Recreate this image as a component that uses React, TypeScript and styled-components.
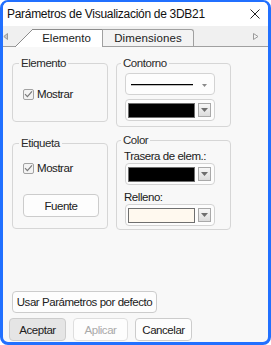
import React from "react";
import styled, { createGlobalStyle } from "styled-components";

const GlobalStyle = createGlobalStyle`
  html, body {
    margin: 0;
    padding: 0;
    background: #ffffff;
  }
  * {
    box-sizing: border-box;
  }
`;

const uiFont = `"Liberation Sans", Arial, sans-serif`;

const Window = styled.div`
  width: 271px;
  height: 345px;
  border: 3px solid #2170ff;
  border-top-width: 2px;
  border-radius: 8px;
  overflow: hidden;
  display: flex;
  flex-direction: column;
  background: #f8f8f8;
  font-family: ${uiFont};
  font-size: 11.5px;
  letter-spacing: -0.45px;
  color: #202020;
`;

const TitleBar = styled.div`
  height: 24px;
  flex: none;
  background: #ffffff;
  display: flex;
  align-items: center;
  justify-content: space-between;
  padding: 0 8px 0 4px;
`;

const Title = styled.span`
  font-size: 12px;
  letter-spacing: -0.3px;
  color: #111111;
`;

const TabStrip = styled.div`
  height: 21px;
  flex: none;
  background: #f0f0f0;
  border-bottom: 1px solid #a0a0a0;
  display: flex;
  align-items: flex-end;
`;

const ScrollArrow = styled.svg<{ $side: "left" | "right" }>`
  align-self: center;
  flex: none;
  margin: ${(p) => (p.$side === "left" ? "0 7px 0 0" : "0 9px 0 auto")};
`;

const ActiveTab = styled.div`
  position: relative;
  z-index: 1;
  width: 87px;
  height: 18px;
  margin-bottom: -1px;
  padding-left: 16px;
  display: flex;
  align-items: center;
  justify-content: center;
  font-size: 11.5px;
  letter-spacing: 0;
  color: #222;
  background:
    linear-gradient(#8c8c8c, #8c8c8c) 18px 0 / calc(100% - 18px) 1px no-repeat,
    linear-gradient(
        to top left,
        #ffffff calc(50% - 0.6px),
        #8c8c8c calc(50% - 0.6px),
        #8c8c8c calc(50% + 0.6px),
        transparent calc(50% + 0.6px)
      )
      0 0 / 18px 100% no-repeat,
    linear-gradient(#ffffff, #ffffff) 18px 0 / calc(100% - 18px) 100% no-repeat;
`;

const Tab = styled.div`
  width: 92px;
  height: 17px;
  border: 1px solid #a0a0a0;
  border-bottom: none;
  border-top-right-radius: 3px;
  background: #f3f3f3;
  display: flex;
  align-items: center;
  justify-content: center;
  font-size: 11.5px;
  letter-spacing: 0.1px;
  color: #222;
`;

const Content = styled.div`
  flex: 1;
  display: flex;
  flex-direction: column;
  padding: 9px 0 1px 6px;
`;

const Columns = styled.div`
  display: flex;
  align-items: flex-start;
  gap: 8px;
  margin-left: 3px;
`;

const Column = styled.div<{ $width: number }>`
  width: ${(p) => p.$width}px;
  display: flex;
  flex-direction: column;
`;

const Group = styled.fieldset<{ $pad: string; $top?: number }>`
  margin: ${(p) => p.$top ?? 0}px 0 0 0;
  min-width: 0;
  border: 1px solid #d6d6d6;
  border-radius: 4px;
  padding: ${(p) => p.$pad};
  display: flex;
  flex-direction: column;
`;

const Legend = styled.legend`
  margin-left: -4px;
  padding: 0 2px;
  line-height: 14px;
  color: #2a2a2a;
`;

const CheckRow = styled.label`
  display: flex;
  align-items: center;
  gap: 3px;
  height: 14px;
`;

const CheckBox = styled.span`
  width: 11px;
  height: 11px;
  border: 1px solid #a2a2a2;
  border-radius: 2px;
  background: #f3f3f3;
  display: flex;
  align-items: center;
  justify-content: center;
`;

const FieldLabel = styled.div<{ $top?: number }>`
  height: 14px;
  line-height: 14px;
  margin: ${(p) => p.$top ?? 0}px 0 0 -1px;
`;

const Combo = styled.div<{ $top?: number }>`
  width: 90px;
  height: 22px;
  margin-top: ${(p) => p.$top ?? 0}px;
  border: 1px solid #d3d3d3;
  border-radius: 4px;
  background: #fdfdfd;
  display: flex;
  align-items: center;
  padding: 0 2px 0 2px;
`;

const LineSample = styled.span`
  width: 62px;
  height: 1px;
  margin-left: 3px;
  background: #000000;
  box-shadow: 0 0.5px 0 rgba(0, 0, 0, 0.5);
`;

const TinyArrow = styled.svg`
  margin: 2px 5px 0 auto;
`;

const Swatch = styled.span<{ $color: string }>`
  width: 67px;
  height: 15px;
  border: 1px solid #6f6f6f;
  background: ${(p) => p.$color};
`;

const ArrowButton = styled.span`
  width: 13px;
  height: 14px;
  margin-left: auto;
  margin-right: 1px;
  border: 1px solid #a9a9a9;
  background: linear-gradient(#f7f7f7, #dcdcdc);
  display: flex;
  align-items: center;
  justify-content: center;
`;

type Tone = "normal" | "pressed" | "disabled";

const Button = styled.button<{ $w: number; $h: number; $tone?: Tone; $top?: number }>`
  width: ${(p) => p.$w}px;
  height: ${(p) => p.$h}px;
  margin-top: ${(p) => (p.$top === undefined ? "0" : `${p.$top}px`)};
  padding: 0;
  border: 1px solid ${(p) => (p.$tone === "disabled" ? "#dedede" : "#cccccc")};
  border-radius: 4px;
  background: ${(p) => (p.$tone === "pressed" ? "#e5e5e5" : "#fdfdfd")};
  color: ${(p) => (p.$tone === "disabled" ? "#a9a9a9" : "#202020")};
  font-family: ${uiFont};
  font-size: 11.5px;
  letter-spacing: -0.45px;
  white-space: nowrap;
  flex: none;
`;

const DefaultButton = styled(Button)`
  margin-top: auto;
  margin-left: 3px;
`;

const ButtonRow = styled.div`
  display: flex;
  gap: 7px;
  margin-top: 5px;
`;

const Check = () => (
  <CheckBox>
    <svg width="9" height="8" viewBox="0 0 9 8">
      <path d="M1 4.2 L3.4 6.6 L8 1.4" fill="none" stroke="#7a7a7a" strokeWidth="1.2" />
    </svg>
  </CheckBox>
);

const DownArrow = () => (
  <svg width="7" height="4" viewBox="0 0 7 4">
    <path d="M0 0 H7 L3.5 4 Z" fill="#6e6e6e" />
  </svg>
);

const ColorCombo = ({ color, top }: { color: string; top?: number }) => (
  <Combo $top={top}>
    <Swatch $color={color} />
    <ArrowButton>
      <DownArrow />
    </ArrowButton>
  </Combo>
);

export default function App() {
  return (
    <>
      <GlobalStyle />
      <Window>
        <TitleBar>
          <Title>Parámetros de Visualización de 3DB21</Title>
          <svg width="10" height="10" viewBox="0 0 10 10">
            <path d="M0.5 0.5 L9.5 9.5 M9.5 0.5 L0.5 9.5" stroke="#222" strokeWidth="1" />
          </svg>
        </TitleBar>

        <TabStrip>
          <ScrollArrow $side="left" width="5" height="7" viewBox="0 0 5 7">
            <path d="M4.5 0.5 V6.5 L0.8 3.5 Z" fill="#c8c8c8" stroke="#9a9a9a" strokeWidth="1" />
          </ScrollArrow>
          <ActiveTab>Elemento</ActiveTab>
          <Tab>Dimensiones</Tab>
          <ScrollArrow $side="right" width="6" height="7" viewBox="0 0 6 7">
            <path d="M0.5 0.5 V6.5 L5 3.5 Z" fill="#f4f4f4" stroke="#9a9a9a" strokeWidth="1" />
          </ScrollArrow>
        </TabStrip>

        <Content>
          <Columns>
            <Column $width={96}>
              <Group $pad="17px 10px 20px 10px">
                <Legend>Elemento</Legend>
                <CheckRow>
                  <Check />
                  Mostrar
                </CheckRow>
              </Group>
              <Group $pad="11px 9px 11px 10px" $top={14}>
                <Legend>Etiqueta</Legend>
                <CheckRow>
                  <Check />
                  Mostrar
                </CheckRow>
                <Button $w={76} $h={23} $top={19}>
                  Fuente
                </Button>
              </Group>
            </Column>

            <Column $width={115}>
              <Group $pad="3px 15px 5px 8px">
                <Legend>Contorno</Legend>
                <Combo>
                  <LineSample />
                  <TinyArrow width="5" height="3" viewBox="0 0 5 3">
                    <path d="M0 0 H5 L2.5 3 Z" fill="#8a8a8a" />
                  </TinyArrow>
                </Combo>
                <ColorCombo color="#000000" top={4} />
              </Group>
              <Group $pad="2px 15px 3px 8px" $top={6}>
                <Legend>Color</Legend>
                <FieldLabel>Trasera de elem.:</FieldLabel>
                <ColorCombo color="#000000" />
                <FieldLabel $top={5}>Relleno:</FieldLabel>
                <ColorCombo color="#fff9ef" />
              </Group>
            </Column>
          </Columns>

          <DefaultButton $w={145} $h={22}>
            Usar Parámetros por defecto
          </DefaultButton>
          <ButtonRow>
            <Button $w={57} $h={23} $tone="pressed">
              Aceptar
            </Button>
            <Button $w={55} $h={23} $tone="disabled">
              Aplicar
            </Button>
            <Button $w={57} $h={23}>
              Cancelar
            </Button>
          </ButtonRow>
        </Content>
      </Window>
    </>
  );
}
